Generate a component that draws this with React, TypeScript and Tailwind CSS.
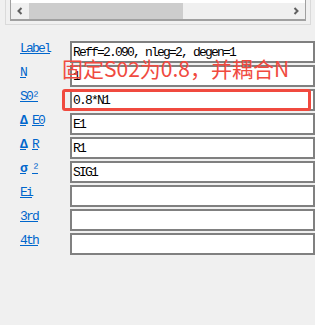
const wide = "inline-block w-[12px] underline underline-offset-[1px] font-bold";

const rows: { label: React.ReactNode; value: string }[] = [
  { label: "Label", value: "Reff=2.090, nleg=2, degen=1" },
  { label: "N", value: "1" },
  { label: "S0²", value: "0.8*N1" },
  { label: <><span className={wide}>Δ</span>E0</>, value: "E1" },
  { label: <><span className={wide}>Δ</span>R</>, value: "R1" },
  { label: <><span className={wide}>σ</span>²</>, value: "SIG1" },
  { label: "Ei", value: "" },
  { label: "3rd", value: "" },
  { label: "4th", value: "" },
];

const mono = "font-['Liberation_Mono',monospace] text-[13px] tracking-[-1.8px] leading-[13px]";

export default function App() {
  return (
    <div className="w-[315px] h-[325px] bg-[#f0f0f0] overflow-hidden">
      {/* list box bottom + horizontal scrollbar */}
      <div className="ml-[5px] w-[306px] border-x border-b border-[#dadada] px-[4px] pb-[3px]">
        <div className="w-[296px] border-x border-b-2 border-[#a0a0a0]">
          <div className="h-[3px] bg-white" />
          <div className="h-[16px] flex items-stretch bg-[#f0f0f0]">
            <div className="w-[18px] flex items-center justify-center">
              <svg width="8" height="8" viewBox="0 0 8 8">
                <path d="M5.5 1 L2.5 4 L5.5 7" stroke="#606060" strokeWidth="2" fill="none" />
              </svg>
            </div>
            <div className="w-[154px] bg-[#cdcdcd]" />
            <div className="flex-1" />
            <div className="w-[18px] flex items-center justify-center">
              <svg width="8" height="8" viewBox="0 0 8 8">
                <path d="M2.5 1 L5.5 4 L2.5 7" stroke="#606060" strokeWidth="2" fill="none" />
              </svg>
            </div>
          </div>
        </div>
      </div>

      <div className="relative mt-[16px] pl-[20px] flex flex-col gap-[2px]">
        {rows.map((r, i) => (
          <div key={i} className="flex h-[22px]">
            <div className={`w-[50px] pt-[1px] text-[#0066cc] underline underline-offset-[1px] ${mono}`}>
              <span>{r.label}</span>
            </div>
            <div className={`w-[245px] h-[22px] shrink-0 bg-white border-2 border-[#808080] pl-[1px] pt-[1px] flex items-center text-black ${mono}`}>
              {r.value}
            </div>
          </div>
        ))}

        <div className="absolute left-[62px] top-[17px] text-[21px] leading-[21px] text-[#f04a3f] font-['Noto_Sans_CJK_SC',sans-serif] whitespace-nowrap">
          固定S02为0.8，并耦合N
        </div>
        <div className="absolute left-[62px] top-[48px] w-[249px] h-[22px] border-[3px] border-[#f04a3f] rounded-[3px]" />
      </div>
    </div>
  );
}
